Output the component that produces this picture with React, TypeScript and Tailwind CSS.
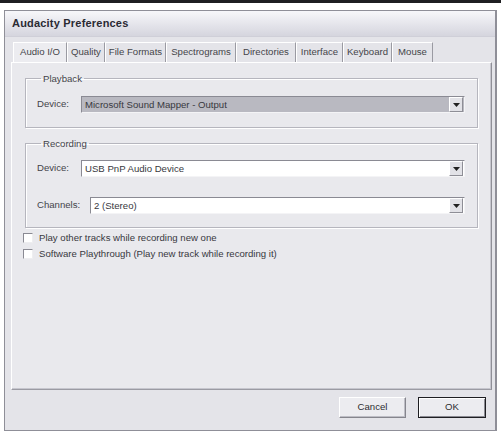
import React from 'react';

const tabs = [
    { label: 'Audio I/O', w: 'w-[54px]', active: true },
    { label: 'Quality', w: 'w-[38px]' },
    { label: 'File Formats', w: 'w-[61px]' },
    { label: 'Spectrograms', w: 'w-[70px]' },
    { label: 'Directories', w: 'w-[60px]' },
    { label: 'Interface', w: 'w-[47px]' },
    { label: 'Keyboard', w: 'w-[49px]' },
    { label: 'Mouse', w: 'w-[41px]' }
];

// small sunken combo box with a raised arrow button
const Combo = ({ value, grey }: { value: string; grey?: boolean }) => (
    <div
        className={`flex-1 h-[17px] flex items-center border border-t-[#8a8a93] border-l-[#8a8a93] border-b-[#f4f4f6] border-r-[#f4f4f6] ${
            grey ? 'bg-[#b9b9c1]' : 'bg-white'
        }`}
    >
        <span className="flex-1 pl-[3px] text-[9.6px] text-[#38383e] leading-none">
            {value}
        </span>
        <div className="w-[14px] h-[15px] mr-[1px] flex items-center justify-center bg-[#e2e2e7] border border-t-white border-l-white border-b-[#8e8e96] border-r-[#8e8e96]">
            <svg width="7" height="4" viewBox="0 0 7 4">
                <path d="M0 0h7L3.5 4z" fill="#222" />
            </svg>
        </div>
    </div>
);

const Group = ({
    title,
    className,
    children
}: {
    title: string;
    className?: string;
    children: React.ReactNode;
}) => (
    <fieldset
        className={`ml-[2px] mr-[1px] border border-[#b6b6be] shadow-[1px_1px_0_#ffffff,inset_1px_1px_0_#ffffff] pl-[11px] pr-[12px] ${
            className ?? ''
        }`}
    >
        <legend className="ml-[4px] px-[2px] text-[9.6px] leading-[11px] text-[#44444a]">
            {title}
        </legend>
        {children}
    </fieldset>
);

const Row = ({ label, labelW, children }: { label: string; labelW: string; children: React.ReactNode }) => (
    <div className="flex items-center">
        <span className={`${labelW} text-[9.6px] text-[#44444a]`}>{label}</span>
        {children}
    </div>
);

const Check = ({ label }: { label: string }) => (
    <div className="h-[16px] flex items-center">
        <div className="w-[10px] h-[10px] bg-white border border-t-[#8a8a93] border-l-[#8a8a93] border-b-[#eeeef0] border-r-[#eeeef0]" />
        <span className="ml-[6px] text-[9.6px] text-[#38383e]">{label}</span>
    </div>
);

const App = () => {
    return (
        <div className="w-[501px] h-[431px] overflow-hidden bg-white border-t-[3px] border-[#1f1f22] pt-[7px] px-[4px] font-['Liberation_Sans',Arial,sans-serif]">
            <div className="h-[421px] flex flex-col border border-[#8f8f98] border-r-2 bg-[#e4e4e9]">
                {/* title bar */}
                <div className="h-[26px] flex items-center pl-[7px] bg-gradient-to-b from-[#f7f7fa] to-[#d5d5de] border-b border-[#cfcfd8]">
                    <span className="text-[11px] font-bold text-[#2a2a33] tracking-[0.2px]">
                        Audacity Preferences
                    </span>
                </div>

                <div className="flex-1 flex flex-col pl-[6px] pr-[3px] pt-[5px]">
                    {/* tabs */}
                    <div className="h-[20px] flex items-stretch pl-[2px]">
                        {tabs.map((t) => (
                            <div
                                key={t.label}
                                className={`${t.w} flex items-center justify-center text-[9.6px] text-[#44444a] border-l border-t border-l-white border-t-white border-r border-r-[#9a9aa2] ${
                                    t.active ? 'bg-[#ececf0]' : 'bg-[#e4e4e9]'
                                }`}
                            >
                                {t.label}
                            </div>
                        ))}
                    </div>

                    {/* panel */}
                    <div className="h-[328px] flex flex-col bg-[#e9e9ed] border border-t-white border-l-white border-b-[#9b9ba3] border-r-[#8f8f97] shadow-[inset_-1px_-1px_0_#c6c6ce] pl-[11px] pr-[12px] pt-[10px]">
                        <Group title="Playback" className="pt-[12px] pb-[14px]">
                            <Row label="Device:" labelW="w-[44px]">
                                <Combo value="Microsoft Sound Mapper - Output" grey />
                            </Row>
                        </Group>

                        <Group title="Recording" className="mt-[10px] pt-[11px] pb-[13px]">
                            <Row label="Device:" labelW="w-[44px]">
                                <Combo value="USB PnP Audio Device" />
                            </Row>
                            <div className="h-[20px]" />
                            <Row label="Channels:" labelW="w-[53px]">
                                <Combo value="2 (Stereo)" />
                            </Row>
                        </Group>

                        <div className="mt-[2px]">
                            <Check label="Play other tracks while recording new one" />
                            <Check label="Software Playthrough (Play new track while recording it)" />
                        </div>
                    </div>

                    {/* buttons */}
                    <div className="flex justify-end gap-[12px] pt-[7px] pr-[6px]">
                        <button className="w-[67px] h-[21px] text-[9.6px] text-[#2c2c30] bg-[#ececf0] border border-t-white border-l-white border-b-[#85858d] border-r-[#85858d] shadow-[inset_-1px_-1px_0_#bdbdc5]">
                            Cancel
                        </button>
                        <button className="w-[68px] h-[21px] text-[9.6px] text-[#2c2c30] bg-[#ececf0] border border-[#1e1e22] shadow-[inset_1px_1px_0_#fff,inset_-1px_-1px_0_#8a8a92]">
                            OK
                        </button>
                    </div>
                </div>
            </div>
        </div>
    );
};

export default App;
